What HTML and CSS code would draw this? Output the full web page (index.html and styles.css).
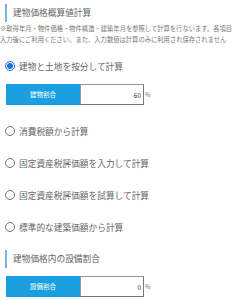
FILE: index.html
```html
<html>

<head>
    <meta charset="utf-8">
    <link rel="stylesheet" href="styles.css">
</head>

<body>
    <div class="heading">建物価格概算値計算</div>
    <div class="note">※取得年月・物件価格・物件構造・建築年月を参照して計算を行ないます。各項目<br>入力後にご利用ください。また、入力数値は計算のみに利用され保存されません</div>

    <label class="option"><input type="radio" name="calc" checked> 建物と土地を按分して計算</label>
    <div class="ratio">
        <div class="ratio-label">建物割合</div>
        <input class="ratio-input" type="text" value="60">
        <span class="unit">%</span>
    </div>

    <label class="option"><input type="radio" name="calc"> 消費税額から計算</label>
    <label class="option"><input type="radio" name="calc"> 固定資産税評価額を入力して計算</label>
    <label class="option"><input type="radio" name="calc"> 固定資産税評価額を試算して計算</label>
    <label class="option"><input type="radio" name="calc"> 標準的な建築価額から計算</label>

    <div class="heading sub">建物価格内の設備割合</div>
    <div class="ratio">
        <div class="ratio-label">設備割合</div>
        <input class="ratio-input" type="text" value="0">
        <span class="unit">%</span>
    </div>
</body>

</html>
```

FILE: styles.css
```css
body{
    margin: 0;
    font-family: "Noto Sans CJK JP", "Noto Sans", sans-serif;
    color: #666;
    background: #fff;
}

.heading{
    margin: 4px 0 0 5px;
    padding-left: 6px;
    border-left: 2px solid #7ab2e6;
    font-size: 8.7px;
    line-height: 18px;
    color: #666;
}

.heading.sub{
    margin-top: 7px;
}

.note{
    margin-top: 1px;
    font-size: 6.3px;
    line-height: 11px;
    color: #777;
    white-space: nowrap;
    overflow: hidden;
}

.option{
    display: flex;
    align-items: center;
    height: 32px;
    font-size: 8.7px;
    color: #666;
}

.note + .option{
    margin-top: 5px;
}

.option input{
    width: 10px;
    height: 10px;
    margin: 0 4px 0 5px;
    accent-color: #1a73e8;
}

.ratio{
    display: flex;
    align-items: center;
    margin: 2px 0 10px 6px;
    height: 21px;
}

.heading.sub + .ratio{
    margin-top: 8px;
}

.ratio-label{
    width: 74px;
    height: 21px;
    line-height: 21px;
    background: #1a9fe0;
    color: #fff;
    font-size: 6.5px;
    text-align: center;
}

.ratio-input{
    box-sizing: border-box;
    width: 64px;
    height: 21px;
    margin: 0;
    padding: 0 2px;
    border: 1px solid #999;
    border-right-color: #777;
    border-bottom-color: #777;
    font-family: inherit;
    font-size: 6.5px;
    color: #333;
    text-align: right;
    outline: none;
}

.unit{
    margin-left: 1px;
    font-size: 6px;
    color: #666;
}
```
